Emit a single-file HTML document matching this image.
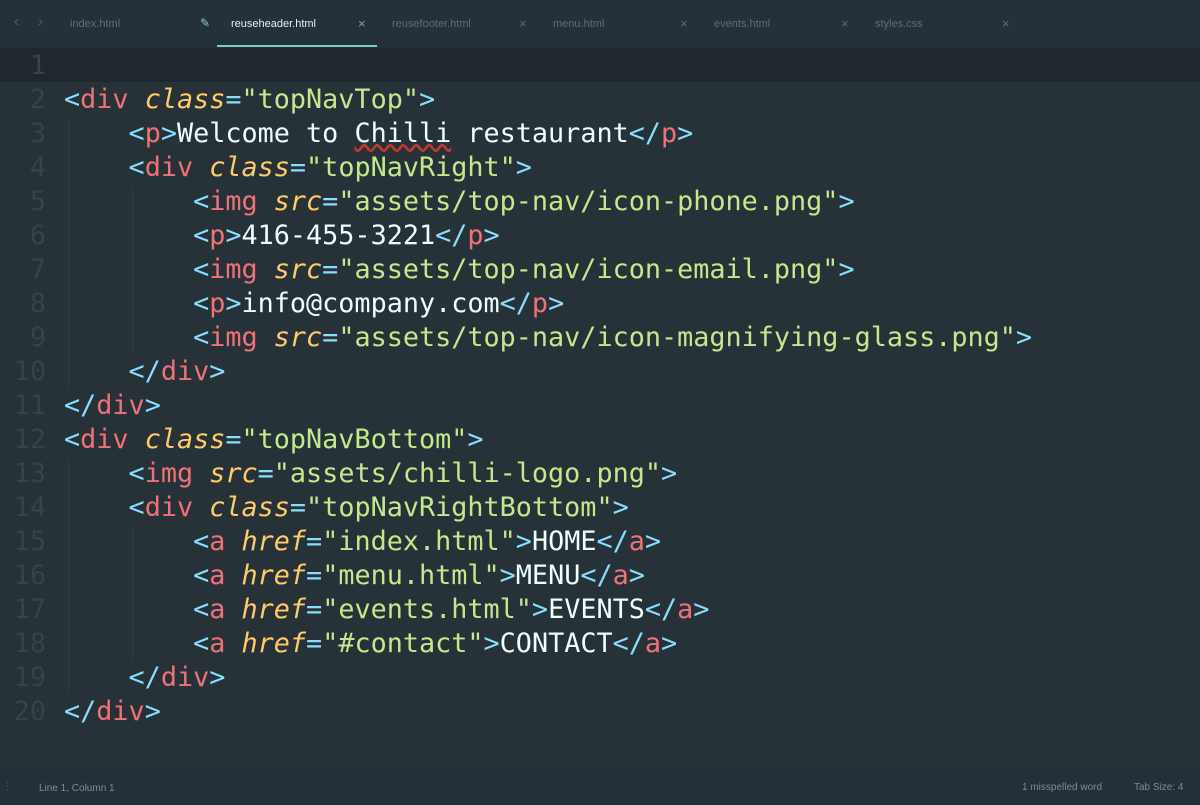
<!DOCTYPE html>
<html><head><meta charset="utf-8"><style>
*{margin:0;padding:0;box-sizing:border-box}
body{width:1200px;height:805px;background:#263238;overflow:hidden;position:relative;font-family:"Liberation Sans",sans-serif}
#tabs{position:absolute;left:0;top:0;width:1200px;height:48px;background:#25313a}
.t{position:absolute;top:18px;font-size:11px;color:#5d6d77}
.x{position:absolute;top:16px;font-size:13px;color:#5d6d77}
#hl{position:absolute;left:0;top:48px;width:1200px;height:34px;background:#1f282d}
.ln{position:absolute;left:0;width:46px;text-align:right;font-family:"DejaVu Sans Mono",monospace;font-size:26.8px;color:#36434b;line-height:34px}
.code{position:absolute;left:64px;font-family:"DejaVu Sans Mono",monospace;font-size:26.8px;line-height:34px;white-space:pre;color:#eeffff}
.b{color:#89ddff}.g{color:#f07178}.a{color:#ffcb6b;font-style:italic}.s{color:#c3e88d}
.guide{position:absolute;width:1px;background:#303d45}
#status{position:absolute;left:0;top:770px;width:1200px;height:35px;background:#252f38;font-size:10px;color:#7f8c94}
</style></head><body>
<div id="tabs">
<span class="t" style="left:14px;top:13px;font-size:15px;color:#4e5d66">&#8249;</span>
<span class="t" style="left:38px;top:13px;font-size:15px;color:#4e5d66">&#8250;</span>
<span class="t" style="left:70px">index.html</span>
<span class="t" style="left:200px;top:16px;color:#80cbc4;font-size:12px">&#9998;</span>
<span class="t" style="left:231px;color:#e6eef2">reuseheader.html</span>
<span class="x" style="left:358px;color:#8a99a2">×</span>
<span class="t" style="left:392px">reusefooter.html</span>
<span class="x" style="left:519px">×</span>
<span class="t" style="left:553px">menu.html</span>
<span class="x" style="left:680px">×</span>
<span class="t" style="left:714px">events.html</span>
<span class="x" style="left:841px">×</span>
<span class="t" style="left:875px">styles.css</span>
<span class="x" style="left:1002px">×</span>
<div style="position:absolute;left:217px;top:45px;width:160px;height:2px;background:#80cbc4"></div>
</div>
<div id="hl"></div>
<div class="guide" style="left:68px;top:117px;height:272px"></div>
<div class="guide" style="left:132px;top:185px;height:170px"></div>
<div class="guide" style="left:68px;top:457px;height:238px"></div>
<div class="guide" style="left:132px;top:525px;height:136px"></div>
<div class="ln" style="top:49px">1<br>2<br>3<br>4<br>5<br>6<br>7<br>8<br>9<br>10<br>11<br>12<br>13<br>14<br>15<br>16<br>17<br>18<br>19<br>20</div>
<div class="code" style="top:49px">
<span class="b">&lt;</span><span class="g">div</span> <span class="a">class</span><span class="b">=</span><span class="s">"topNavTop"</span><span class="b">&gt;</span>
    <span class="b">&lt;</span><span class="g">p</span><span class="b">&gt;</span>Welcome to <span style="text-decoration:underline wavy #c0392b">Chilli</span> restaurant<span class="b">&lt;/</span><span class="g">p</span><span class="b">&gt;</span>
    <span class="b">&lt;</span><span class="g">div</span> <span class="a">class</span><span class="b">=</span><span class="s">"topNavRight"</span><span class="b">&gt;</span>
        <span class="b">&lt;</span><span class="g">img</span> <span class="a">src</span><span class="b">=</span><span class="s">"assets/top-nav/icon-phone.png"</span><span class="b">&gt;</span>
        <span class="b">&lt;</span><span class="g">p</span><span class="b">&gt;</span>416-455-3221<span class="b">&lt;/</span><span class="g">p</span><span class="b">&gt;</span>
        <span class="b">&lt;</span><span class="g">img</span> <span class="a">src</span><span class="b">=</span><span class="s">"assets/top-nav/icon-email.png"</span><span class="b">&gt;</span>
        <span class="b">&lt;</span><span class="g">p</span><span class="b">&gt;</span>info@company.com<span class="b">&lt;/</span><span class="g">p</span><span class="b">&gt;</span>
        <span class="b">&lt;</span><span class="g">img</span> <span class="a">src</span><span class="b">=</span><span class="s">"assets/top-nav/icon-magnifying-glass.png"</span><span class="b">&gt;</span>
    <span class="b">&lt;/</span><span class="g">div</span><span class="b">&gt;</span>
<span class="b">&lt;/</span><span class="g">div</span><span class="b">&gt;</span>
<span class="b">&lt;</span><span class="g">div</span> <span class="a">class</span><span class="b">=</span><span class="s">"topNavBottom"</span><span class="b">&gt;</span>
    <span class="b">&lt;</span><span class="g">img</span> <span class="a">src</span><span class="b">=</span><span class="s">"assets/chilli-logo.png"</span><span class="b">&gt;</span>
    <span class="b">&lt;</span><span class="g">div</span> <span class="a">class</span><span class="b">=</span><span class="s">"topNavRightBottom"</span><span class="b">&gt;</span>
        <span class="b">&lt;</span><span class="g">a</span> <span class="a">href</span><span class="b">=</span><span class="s">"index.html"</span><span class="b">&gt;</span>HOME<span class="b">&lt;/</span><span class="g">a</span><span class="b">&gt;</span>
        <span class="b">&lt;</span><span class="g">a</span> <span class="a">href</span><span class="b">=</span><span class="s">"menu.html"</span><span class="b">&gt;</span>MENU<span class="b">&lt;/</span><span class="g">a</span><span class="b">&gt;</span>
        <span class="b">&lt;</span><span class="g">a</span> <span class="a">href</span><span class="b">=</span><span class="s">"events.html"</span><span class="b">&gt;</span>EVENTS<span class="b">&lt;/</span><span class="g">a</span><span class="b">&gt;</span>
        <span class="b">&lt;</span><span class="g">a</span> <span class="a">href</span><span class="b">=</span><span class="s">"#contact"</span><span class="b">&gt;</span>CONTACT<span class="b">&lt;/</span><span class="g">a</span><span class="b">&gt;</span>
    <span class="b">&lt;/</span><span class="g">div</span><span class="b">&gt;</span>
<span class="b">&lt;/</span><span class="g">div</span><span class="b">&gt;</span></div>
<div id="status">
<span style="position:absolute;left:6px;top:11px;color:#56646c;font-size:10px;line-height:4px">·<br>·<br>·</span>
<span style="position:absolute;left:39px;top:13px">Line 1, Column 1</span>
<span style="position:absolute;left:1022px;top:12px">1 misspelled word</span>
<span style="position:absolute;left:1134px;top:12px">Tab Size: 4</span>
</div>
</body></html>
